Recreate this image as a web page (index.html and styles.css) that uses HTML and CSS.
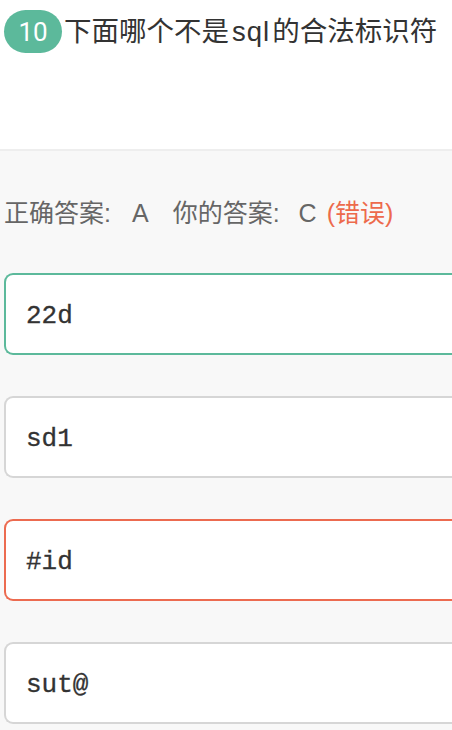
FILE: index.html
```html
<!DOCTYPE html>
<html lang="zh">
<head>
<meta charset="utf-8">
<link rel="stylesheet" href="styles.css">
</head>
<body>
<div class="page">
  <header class="head">
    <div class="title-row">
      <span class="badge">10</span>
      <span class="title">下面哪个不是<span class="latin">sql</span>的合法标识符</span>
    </div>
  </header>
  <main class="body">
    <p class="result"><span class="lbl">正确答案:</span><span class="val first">A</span><span class="lbl second">你的答案:</span><span class="val">C</span><span class="wrong">(错误)</span></p>
    <ul class="options">
      <li class="opt correct">22d</li>
      <li class="opt">sd1</li>
      <li class="opt chosen">#id</li>
      <li class="opt">sut@</li>
    </ul>
  </main>
</div>
</body>
</html>
```
FILE: styles.css
```css
html, body {
  margin: 0;
  padding: 0;
  overflow: hidden;
  background: #f8f8f8;
}
.page {
  width: 452px;
  height: 730px;
  font-family: "Liberation Sans", "Noto Sans CJK SC", sans-serif;
}
.head {
  background: #ffffff;
  height: 139px;
  padding: 10px 4px 0;
  border-bottom: 2px solid #eeeeee;
}
.title-row {
  display: flex;
  align-items: center;
  gap: 2px;
}
.badge {
  display: flex;
  align-items: center;
  justify-content: center;
  width: 58px;
  height: 43px;
  border-radius: 22px;
  background: #5cb99b;
  color: #ffffff;
  font-size: 26px;
  font-family: Roboto, "Noto Sans", sans-serif;
}
.title {
  font-size: 27.5px;
  color: #333333;
  line-height: 43px;
  white-space: nowrap;
}
.latin {
  margin: 0 2px 0 3px;
  letter-spacing: 1px;
}
.body {
  padding: 0 0 0 4px;
}
.result {
  margin: 0;
  padding-top: 46px;
  height: 32px;
  line-height: 32px;
  font-size: 25px;
  color: #666666;
  white-space: nowrap;
}
.val {
  margin-left: 19px;
}
.val.first {
  margin-left: 21px;
}
.second {
  margin-left: 24px;
}
.wrong {
  margin-left: 10px;
  color: #ed6a4c;
}
.options {
  list-style: none;
  margin: 0;
  padding: 0;
  padding-top: 44px;
  display: flex;
  flex-direction: column;
  gap: 41px;
}
.opt {
  box-sizing: border-box;
  height: 82px;
  border: 2px solid #d6d6d6;
  border-right: none;
  border-radius: 9px 0 0 9px;
  background: #ffffff;
  display: flex;
  align-items: center;
  padding: 4px 0 0 20px;
  font-family: "Liberation Mono", "Courier New", monospace;
  font-size: 26px;
  color: #333333;
  -webkit-text-stroke: 0.3px #333333;
}
.opt.correct {
  border-color: #5cb99b;
}
.opt.chosen {
  border-color: #ec6b50;
}
```
